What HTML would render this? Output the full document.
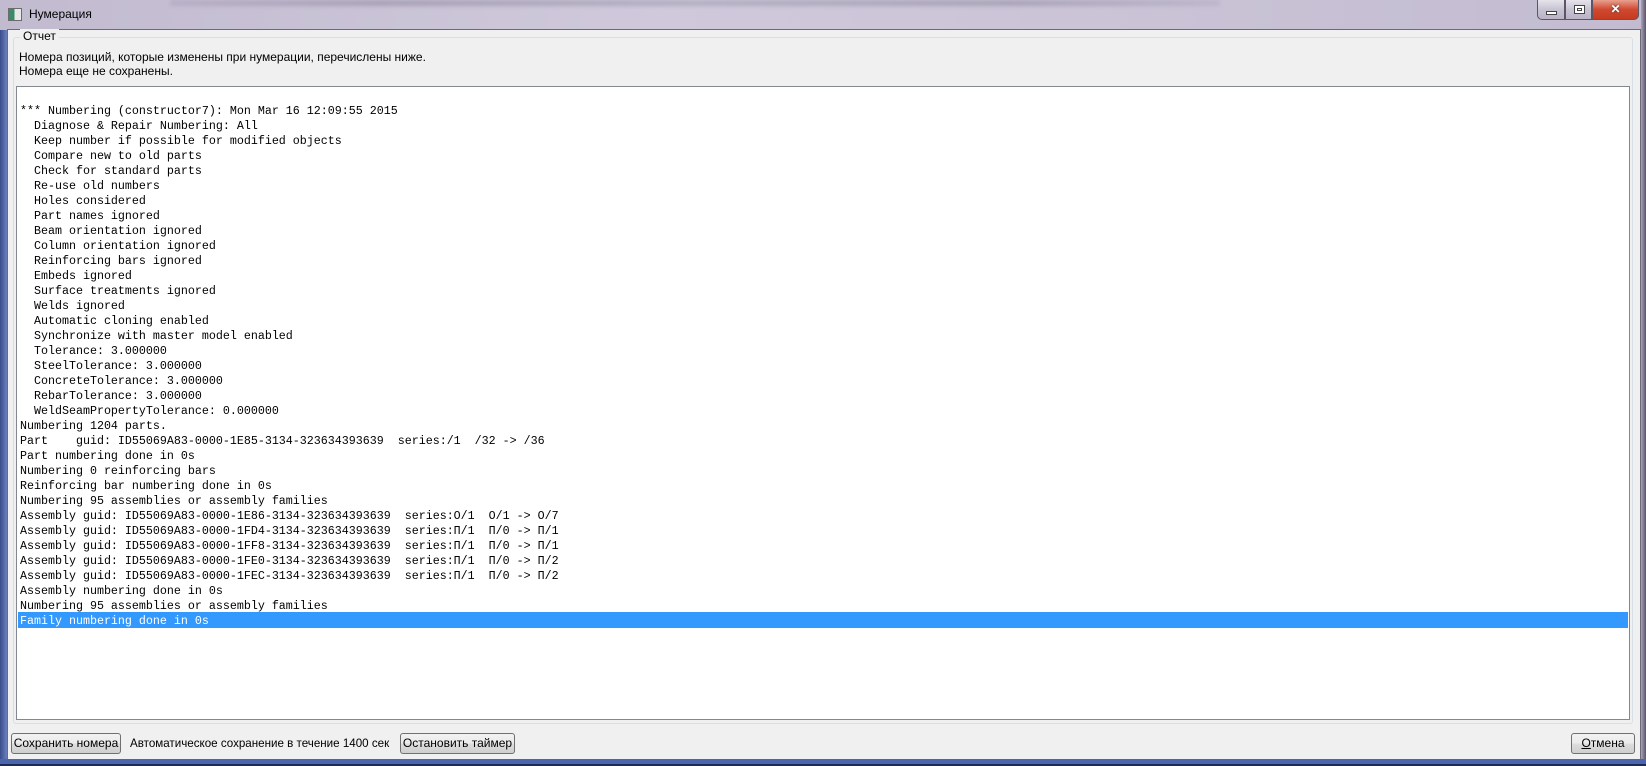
<!DOCTYPE html>
<html><head><meta charset="utf-8"><style>
*{margin:0;padding:0;box-sizing:border-box}
body{width:1646px;height:766px;overflow:hidden;position:relative;background:#bdb6cc;font-family:"Liberation Sans","Noto Sans CJK SC",sans-serif;font-size:12px;color:#000}
.title{position:absolute;left:0;top:0;width:1646px;height:30px;background:linear-gradient(90deg,#c2bbd0 0%,#cfc9db 40%,#cac3d6 70%,#c3bcd1 100%)}
.blur{position:absolute;top:0;height:6px;left:170px;width:1050px;background:linear-gradient(90deg,#b0a8bf,#9a93a8 20%,#a9a4b8 50%,#9b95aa 80%,#b8b1c6);filter:blur(2px);opacity:.7}
.ttext{position:absolute;left:29px;top:7px;font-size:12px}
.ticon{position:absolute;left:8px;top:8px;width:14px;height:13px;border:1px solid #6b6b6b;background:linear-gradient(90deg,#3b8a6c 0 45%,#e8e8e8 45%)}
.tb{position:absolute;top:0;height:20px;border:1px solid #5b5566;border-top:none;background:linear-gradient(#e6e3ec,#c8c3d2 50%,#b9b3c6)}
.close{background:linear-gradient(#e9a08e,#d0492f 50%,#c63a20);border-radius:0 0 5px 0}
.client{position:absolute;left:7px;top:29px;width:1634px;height:731px;background:#f0f0f0;border:1px solid #6d6a78}
.bottomstrip{position:absolute;left:0;top:759px;width:1646px;height:7px;background:#4c66ac;border-bottom:2px solid #1d2a55}
.leftstrip{position:absolute;left:0;top:30px;width:7px;height:736px;background:linear-gradient(90deg,#394c8a,#6c80c0)}
.rightstrip{position:absolute;left:1641px;top:0;width:5px;height:766px;background:linear-gradient(90deg,#a9a2b9,#5a5468)}
.group{position:absolute;left:13px;top:37px;width:1620px;height:687px;border:1px solid #d5dfe5;border-radius:3px}
.glabel{position:absolute;left:20px;top:29px;background:#f0f0f0;padding:0 3px}
.l1{position:absolute;left:19px;top:50px}
.l2{position:absolute;left:19px;top:64px}
.tbox{position:absolute;left:16px;top:86px;width:1614px;height:634px;background:#fff;border:1px solid #828790}
.log{position:absolute;left:20px;top:104px;font-family:"Liberation Mono",monospace;font-size:11.67px;line-height:15px;white-space:pre;color:#000}
.hl{position:absolute;left:18px;top:612px;width:1610px;height:16px;background:#3399ff}
.btn{position:absolute;top:733px;height:21px;border:1px solid #707070;border-radius:3px;background:linear-gradient(#f2f2f2,#ebebeb 50%,#dddddd 51%,#cfcfcf);text-align:center;line-height:19px;font-size:12px}
</style></head><body>
<div class="title"><div class="blur"></div></div>
<div class="ticon"></div>
<div class="ttext">Нумерация</div>
<div class="tb" style="left:1537px;width:28px;border-radius:0 0 0 5px"><div style="position:absolute;left:8px;top:11px;width:11px;height:4px;background:#fff;border:1px solid #444"></div></div>
<div class="tb" style="left:1565px;width:27px"><div style="position:absolute;left:8px;top:5px;width:11px;height:9px;background:#fff;border:1px solid #444"><div style="margin:2px;height:3px;border:1px solid #444"></div></div></div>
<div class="tb close" style="left:1592px;width:47px"><div style="position:absolute;left:0;width:45px;top:2px;text-align:center;color:#fff;font-weight:bold;font-size:12px;text-shadow:0 0 2px #333">✕</div></div>
<div class="rightstrip"></div>
<div class="leftstrip"></div>
<div class="client"></div>
<div class="bottomstrip"></div>
<div class="group"></div>
<div class="glabel">Отчет</div>
<div class="l1">Номера позиций, которые изменены при нумерации, перечислены ниже.</div>
<div class="l2">Номера еще не сохранены.</div>
<div class="tbox"></div>
<div class="hl"></div>
<div class="log">*** Numbering (constructor7): Mon Mar 16 12:09:55 2015
  Diagnose &amp; Repair Numbering: All
  Keep number if possible for modified objects
  Compare new to old parts
  Check for standard parts
  Re-use old numbers
  Holes considered
  Part names ignored
  Beam orientation ignored
  Column orientation ignored
  Reinforcing bars ignored
  Embeds ignored
  Surface treatments ignored
  Welds ignored
  Automatic cloning enabled
  Synchronize with master model enabled
  Tolerance: 3.000000
  SteelTolerance: 3.000000
  ConcreteTolerance: 3.000000
  RebarTolerance: 3.000000
  WeldSeamPropertyTolerance: 0.000000
Numbering 1204 parts.
Part    guid: ID55069A83-0000-1E85-3134-323634393639  series:/1  /32 -&gt; /36
Part numbering done in 0s
Numbering 0 reinforcing bars
Reinforcing bar numbering done in 0s
Numbering 95 assemblies or assembly families
Assembly guid: ID55069A83-0000-1E86-3134-323634393639  series:O/1  O/1 -&gt; O/7
Assembly guid: ID55069A83-0000-1FD4-3134-323634393639  series:П/1  П/0 -&gt; П/1
Assembly guid: ID55069A83-0000-1FF8-3134-323634393639  series:П/1  П/0 -&gt; П/1
Assembly guid: ID55069A83-0000-1FE0-3134-323634393639  series:П/1  П/0 -&gt; П/2
Assembly guid: ID55069A83-0000-1FEC-3134-323634393639  series:П/1  П/0 -&gt; П/2
Assembly numbering done in 0s
Numbering 95 assemblies or assembly families
<span style="color:#fff">Family numbering done in 0s</span></div>
<div class="btn" style="left:11px;width:110px">Сохранить номера</div>
<div style="position:absolute;left:130px;top:737px;font-size:11.6px">Автоматическое сохранение в течение 1400 сек</div>
<div class="btn" style="left:400px;width:115px">Остановить таймер</div>
<div class="btn" style="left:1571px;width:64px"><u>О</u>тмена</div>
</body></html>
